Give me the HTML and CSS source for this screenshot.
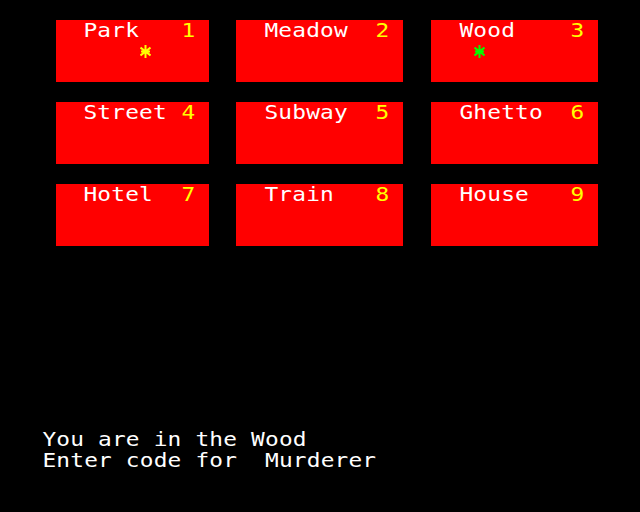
FILE: index.html
```html
<!DOCTYPE html>
<html>
<head>
<meta charset="utf-8">
<link rel="stylesheet" href="styles.css">
</head>
<body>
<div class="screen">
  <div class="card c1 r1 w11"><span class="name">Park</span><span class="num">1</span><span class="mark yellow at7"><svg viewBox="0 0 11 13"><path d="M5.5 0V13M0.5 2.5L10.5 10.5M10.5 2.5L0.5 10.5M1 6.5H10"/></svg></span></div>
  <div class="card c2 r1 w12"><span class="name">Meadow</span><span class="num">2</span></div>
  <div class="card c3 r1 w12"><span class="name">Wood</span><span class="num">3</span><span class="mark green at4"><svg viewBox="0 0 11 13"><path d="M5.5 0V13M0.5 2.5L10.5 10.5M10.5 2.5L0.5 10.5M1 6.5H10"/></svg></span></div>

  <div class="card c1 r2 w11"><span class="name">Street</span><span class="num">4</span></div>
  <div class="card c2 r2 w12"><span class="name">Subway</span><span class="num">5</span></div>
  <div class="card c3 r2 w12"><span class="name">Ghetto</span><span class="num">6</span></div>

  <div class="card c1 r3 w11"><span class="name">Hotel</span><span class="num">7</span></div>
  <div class="card c2 r3 w12"><span class="name">Train</span><span class="num">8</span></div>
  <div class="card c3 r3 w12"><span class="name">House</span><span class="num">9</span></div>

  <div class="line l1">You are in the Wood</div>
  <div class="line l2">Enter code for&nbsp; Murderer</div>
</div>
</body>
</html>
```
FILE: styles.css
```css
html, body {
  margin: 0;
  padding: 0;
  background: #000;
}
.screen {
  width: 640px;
  height: 512px;
  overflow: hidden;
  display: grid;
  grid-template-columns: repeat(46, 13.913px);
  grid-template-rows: repeat(25, 20.48px);
  font-family: "DejaVu Sans Mono", monospace;
  font-size: 19px;
  line-height: 20.48px;
  letter-spacing: 0.154px;
  color: #fff;
  white-space: pre;
}
.card {
  background: #ff0000;
  display: grid;
  grid-template-rows: repeat(3, 20.48px);
}
.w11 { grid-template-columns: repeat(11, 13.913px); }
.w12 { grid-template-columns: repeat(12, 13.913px); }
.c1 { grid-column: 5 / span 11; }
.c2 { grid-column: 18 / span 12; }
.c3 { grid-column: 32 / span 12; }
.r1 { grid-row: 2 / span 3; }
.r2 { grid-row: 6 / span 3; }
.r3 { grid-row: 10 / span 3; }
.name, .num, .line {
  transform: scaleX(1.2);
  transform-origin: -2px 0;
  margin-top: -0.5px;
}
.name {
  grid-row: 1;
  grid-column: 3 / span 7;
}
.num {
  grid-row: 1;
  grid-column: -3 / span 1;
  color: #ffff00;
}
.mark {
  grid-row: 2;
  display: flex;
  align-items: center;
  padding-left: 1px;
}
.mark svg {
  width: 11px;
  height: 13px;
  fill: none;
  stroke: currentColor;
  stroke-width: 2;
}
.at7 { grid-column: 7 / span 1; }
.at4 { grid-column: 4 / span 1; }
.yellow { color: #ffff00; }
.green { color: #00ff00; }
.line {
  grid-column: 4 / span 26;
}
.l1 { grid-row: 22; }
.l2 { grid-row: 23; }
```
